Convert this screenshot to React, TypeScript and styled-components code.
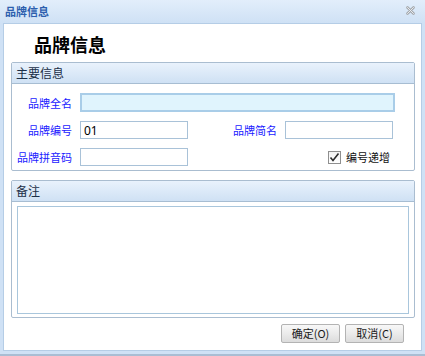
import styled, { createGlobalStyle } from "styled-components";

const GlobalStyle = createGlobalStyle`
  html, body {
    margin: 0;
    padding: 0;
    background: #ffffff;
  }
  * {
    box-sizing: border-box;
  }
`;

const Window = styled.div`
  width: 425px;
  height: 356px;
  display: flex;
  flex-direction: column;
  background: #cfe1f5;
  border-bottom: 2px solid #a9bdd3;
  padding: 0 3px 3px 3px;
  font-family: "Noto Sans CJK SC", "Noto Sans", sans-serif;
  font-size: 12px;
`;

const TitleBar = styled.div`
  height: 23px;
  display: flex;
  align-items: center;
  justify-content: space-between;
  padding: 0 10px 2px 2px;
  margin: 0 -3px;
  background: linear-gradient(#e2eefb, #cfe1f5);
`;

const Title = styled.span`
  color: #2d5fae;
  font-weight: bold;
  font-size: 11px;
  padding-left: 3px;
`;

const CloseIcon = styled.svg`
  width: 9px;
  height: 9px;
`;

const Body = styled.div`
  flex: 1;
  background: #ffffff;
  border: 1px solid #b5cde6;
  padding: 0 6px 0 7px;
  display: flex;
  flex-direction: column;
`;

const Heading = styled.h1`
  margin: 0;
  height: 38px;
  padding: 9px 0 0 23px;
  font-size: 18px;
  line-height: 22px;
  font-weight: bold;
  color: #000000;
`;

const Section = styled.div<{ $grow?: boolean }>`
  border: 1px solid #aabdd0;
  border-radius: 2px;
  display: flex;
  flex-direction: column;
  flex: ${(p) => (p.$grow ? 1 : "none")};
`;

const SectionHeader = styled.div`
  height: 21px;
  line-height: 20px;
  padding-left: 4px;
  color: #1b2f47;
  font-size: 12px;
  background: linear-gradient(#e9f2fc, #cfe1f4);
  border-bottom: 1px solid #a7bdd2;
`;

const FormGrid = styled.div`
  display: grid;
  grid-template-columns: 60px 108px 81px 108px;
  column-gap: 8px;
  row-gap: 9px;
  align-items: center;
  padding: 9px 0 4px 0;
`;

const Label = styled.label`
  color: #1a1aff;
  text-align: right;
  font-size: 11px;
  white-space: nowrap;
`;

const TextInput = styled.input<{ $wide?: boolean }>`
  height: ${(p) => (p.$wide ? "19px" : "18px")};
  width: ${(p) => (p.$wide ? "315px" : "108px")};
  grid-column: ${(p) => (p.$wide ? "2 / 5" : "auto")};
  border: ${(p) => (p.$wide ? "2px solid #a9cde8" : "1px solid #a9c2d8")};
  background: ${(p) => (p.$wide ? "#e0f4fd" : "#ffffff")};
  padding: 0 3px;
  font-family: "Noto Sans", "Noto Sans CJK SC", sans-serif;
  font-size: 12px;
  color: #000000;
  outline: none;
`;

const CheckCell = styled.div`
  grid-column: 3 / 5;
  display: flex;
  justify-content: flex-end;
  align-items: center;
  gap: 5px;
  padding-right: 3px;
  font-size: 11px;
  color: #111111;
`;

const CheckBox = styled.span`
  width: 13px;
  height: 13px;
  border: 1px solid #8f8f8f;
  background: linear-gradient(#f2f2f2, #ffffff);
  display: flex;
  align-items: center;
  justify-content: center;
`;

const Gap = styled.div`
  height: 9px;
  flex: none;
`;

const Remarks = styled.textarea`
  flex: 1;
  margin: 4px 5px 3px 5px;
  border: 1px solid #a9c6dc;
  resize: none;
  outline: none;
`;

const Footer = styled.div`
  display: flex;
  justify-content: flex-end;
  gap: 5px;
  padding: 6px 11px 7px 0;
`;

const Button = styled.button<{ $width: number }>`
  width: ${(p) => p.$width}px;
  height: 19px;
  padding: 0;
  border: 1px solid #b3b3b3;
  border-radius: 2px;
  background: linear-gradient(#f8f8f8 0%, #ebebeb 50%, #dcdcdc 100%);
  font-family: "Noto Sans CJK SC", "Noto Sans", sans-serif;
  font-size: 11px;
  line-height: 17px;
  color: #1a1a1a;
`;

export default function App() {
  return (
    <>
      <GlobalStyle />
      <Window>
        <TitleBar>
          <Title>品牌信息</Title>
          <CloseIcon viewBox="0 0 9 9">
            <path
              d="M1.5 1.5 L7.5 7.5 M7.5 1.5 L1.5 7.5"
              stroke="#a5a9ad"
              strokeWidth="2.6"
              strokeLinecap="round"
            />
            <path
              d="M1.5 1.5 L7.5 7.5 M7.5 1.5 L1.5 7.5"
              stroke="#eef2f7"
              strokeWidth="0.9"
              strokeLinecap="round"
            />
          </CloseIcon>
        </TitleBar>
        <Body>
          <Heading>品牌信息</Heading>
          <Section>
            <SectionHeader>主要信息</SectionHeader>
            <FormGrid>
              <Label>品牌全名</Label>
              <TextInput $wide />
              <Label>品牌编号</Label>
              <TextInput defaultValue="01" />
              <Label>品牌简名</Label>
              <TextInput />
              <Label>品牌拼音码</Label>
              <TextInput />
              <CheckCell>
                <CheckBox>
                  <svg width="11" height="11" viewBox="0 0 11 11">
                    <path
                      d="M1.5 5.5 L4 8.5 L9.5 1.5"
                      fill="none"
                      stroke="#2b2b2b"
                      strokeWidth="1.6"
                    />
                  </svg>
                </CheckBox>
                编号递增
              </CheckCell>
            </FormGrid>
          </Section>
          <Gap />
          <Section $grow>
            <SectionHeader>备注</SectionHeader>
            <Remarks />
          </Section>
          <Footer>
            <Button $width={59}>确定(O)</Button>
            <Button $width={59}>取消(C)</Button>
          </Footer>
        </Body>
      </Window>
    </>
  );
}
